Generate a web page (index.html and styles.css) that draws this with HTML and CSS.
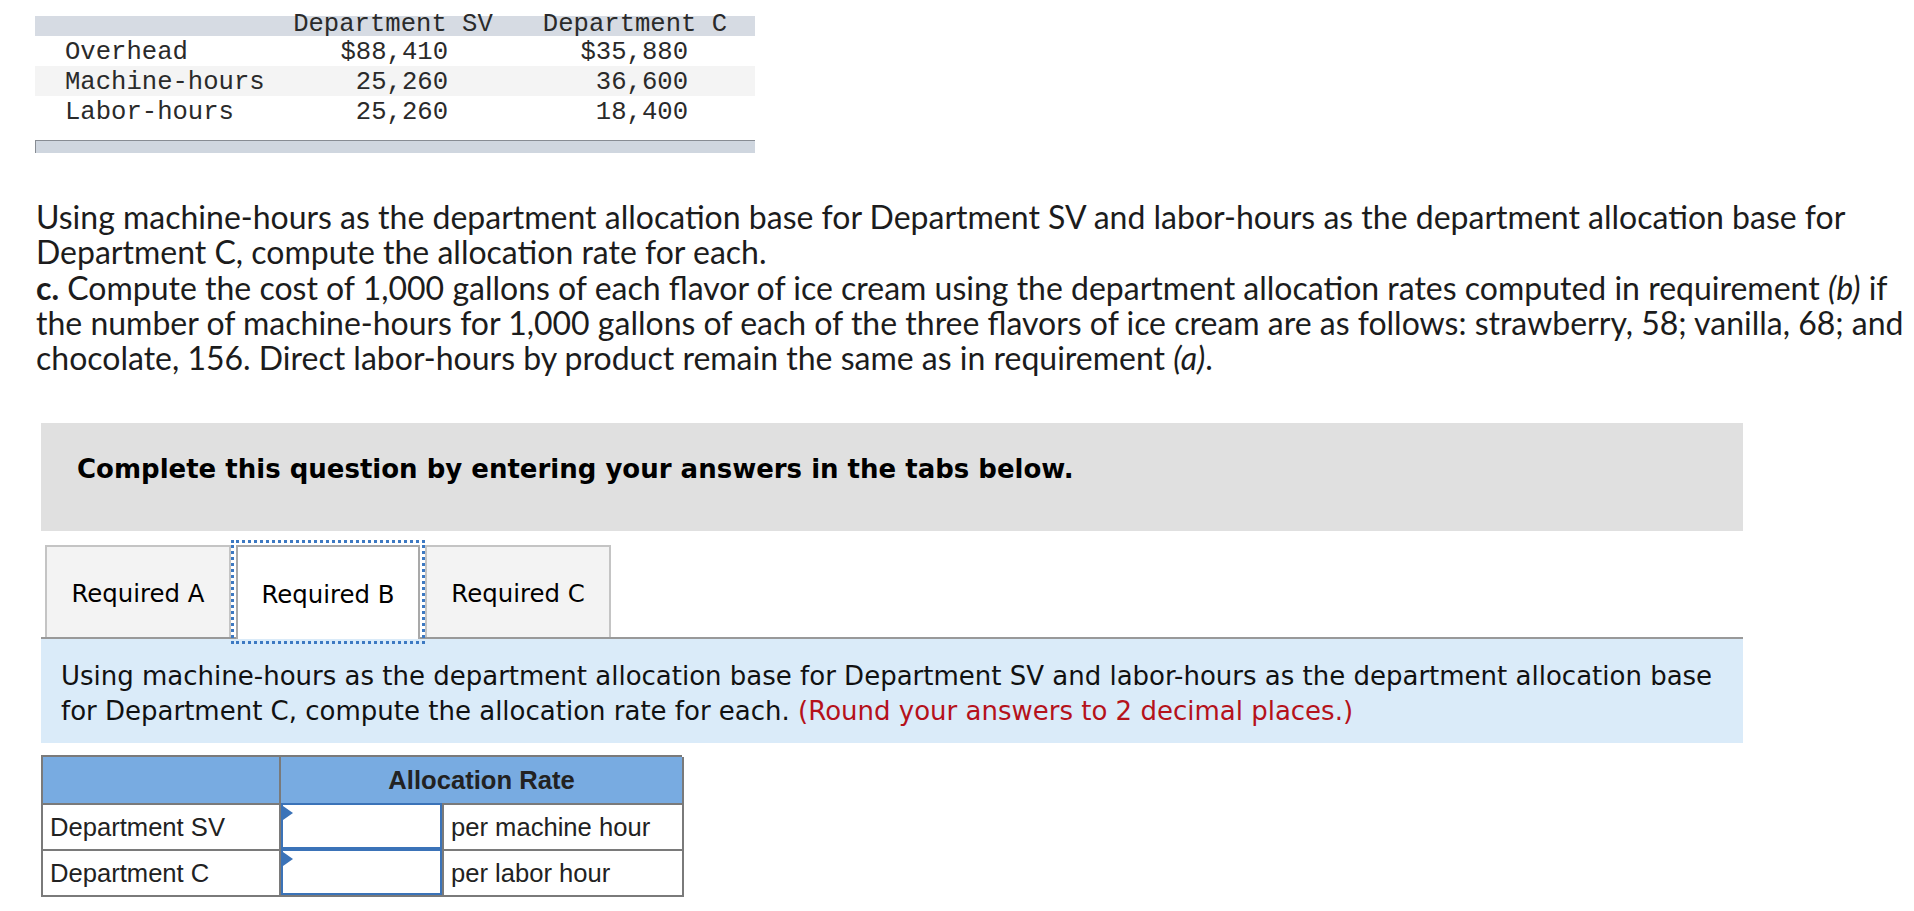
FILE: index.html
```html
<!DOCTYPE html>
<html lang="en">
<head>
<meta charset="utf-8">
<title>Allocation Rate</title>
<link rel="stylesheet" href="styles.css">
</head>
<body>
<div class="data-table">
  <div class="dt-head">
    <div></div>
    <div class="dt-h">Department SV</div>
    <div></div>
    <div class="dt-h">Department C</div>
    <div></div>
  </div>
  <div class="dt-row">
    <div class="dt-label">Overhead</div>
    <div class="dt-val sv">$88,410</div>
    <div></div>
    <div class="dt-val c">$35,880</div>
    <div></div>
  </div>
  <div class="dt-row alt">
    <div class="dt-label">Machine-hours</div>
    <div class="dt-val sv">25,260</div>
    <div></div>
    <div class="dt-val c">36,600</div>
    <div></div>
  </div>
  <div class="dt-row">
    <div class="dt-label">Labor-hours</div>
    <div class="dt-val sv">25,260</div>
    <div></div>
    <div class="dt-val c">18,400</div>
    <div></div>
  </div>
  <div class="dt-scroll"></div>
</div>

<p class="prompt"><span class="ln">Using machine-hours as the department allocation base for Department SV and labor-hours as the department allocation base for</span><br><span class="ln">Department C, compute the allocation rate for each.</span><br><span class="ln"><b>c.</b> Compute the cost of 1,000 gallons of each flavor of ice cream using the department allocation rates computed in requirement <i>(b)</i> if</span><br><span class="ln">the number of machine-hours for 1,000 gallons of each of the three flavors of ice cream are as follows: strawberry, 58; vanilla, 68; and</span><br><span class="ln">chocolate, 156. Direct labor-hours by product remain the same as in requirement <i>(a)</i>.</span></p>

<div class="question">
  <div class="instructions">Complete this question by entering your answers in the tabs below.</div>
  <div class="tabs">
    <div class="tab">Required A</div>
    <div class="tab active">Required B</div>
    <div class="tab">Required C</div>
  </div>
  <div class="tab-panel">
    <div class="panel-text">Using machine-hours as the department allocation base for Department SV and labor-hours as the department allocation base<br>for Department C, compute the allocation rate for each. <span class="hint">(Round your answers to 2 decimal places.)</span></div>
  </div>
  <div class="answer">
    <div class="a-cell a-head"></div>
    <div class="a-cell a-head a-span">Allocation Rate</div>
    <div class="a-cell a-label">Department SV</div>
    <div class="a-cell a-input"><div class="input-box"></div><span class="marker"></span></div>
    <div class="a-cell a-unit">per machine hour</div>
    <div class="a-cell a-label">Department C</div>
    <div class="a-cell a-input"><div class="input-box"></div><span class="marker"></span></div>
    <div class="a-cell a-unit">per labor hour</div>
  </div>
</div>
</body>
</html>
```

FILE: styles.css
```css
* { box-sizing: border-box; }
html, body { margin: 0; padding: 0; background: #fff; }
body { color: #1f1f1f; }

/* top data table */
.data-table {
  margin: 16px 0 0 35px;
  width: 720px;
  font-family: "Liberation Mono", "Courier New", monospace;
  font-size: 25.6px;
  color: #2a2a2a;
}
.dt-head, .dt-row {
  display: grid;
  grid-template-columns: 258px 200px 42px 200px 1fr;
}
.dt-head {
  height: 20px;
  line-height: 17px;
  background: #d6dbe3;
}
.dt-h { text-align: center; white-space: nowrap; }
.dt-row {
  height: 30px;
  padding-top: 3px;
  line-height: 27px;
}
.dt-row.alt { background: #f4f4f4; }
.dt-label { padding-left: 30px; white-space: nowrap; }
.dt-val { text-align: right; white-space: nowrap; }
.dt-val.sv { padding-right: 45px; }
.dt-val.c { padding-right: 47px; }
.dt-scroll {
  margin-top: 14px;
  height: 13px;
  background: #cfd6df;
  border-top: 1px solid #878c93;
  border-left: 1px solid #878c93;
}

/* prompt paragraph */
.prompt {
  margin: 0;
  padding: 46px 0 0 36px;
  font-family: Lato, "Open Sans", sans-serif;
  font-size: 32px;
  line-height: 35.3px;
  color: #1c1c1c;
  white-space: nowrap;
}
.prompt b { font-weight: 700; }

/* question block */
.question {
  margin: 48px 0 0 41px;
  width: 1702px;
  font-family: "DejaVu Sans", Verdana, sans-serif;
}
.instructions {
  height: 108px;
  background: #e0e0e0;
  padding: 28px 0 0 36px;
  font-weight: 700;
  font-size: 26px;
  line-height: 36px;
  color: #000;
  white-space: nowrap;
}
.tabs {
  display: flex;
  gap: 5px;
  margin-top: 14px;
  padding-left: 4px;
  height: 94px;
  border-bottom: 2px solid #999;
  align-items: stretch;
}
.tab {
  width: 186px;
  border: 2px solid #c4c4c4;
  border-bottom: none;
  background: #f3f3f3;
  font-size: 24.4px;
  color: #000;
  display: flex;
  align-items: center;
  justify-content: center;
  padding-top: 2px;
  white-space: nowrap;
}
.tab.active {
  width: 184px;
  background: #fff;
  border-color: #a9a9a9;
  margin-bottom: -2px;
  outline: 3px dotted #3d79c2;
  outline-offset: 2px;
}
.tab-panel {
  background: #daebf9;
  height: 104px;
  padding: 20px 0 0 20px;
}
.panel-text {
  font-size: 26px;
  line-height: 35px;
  color: #111;
  white-space: nowrap;
}
.hint { color: #b5121b; }

/* answer grid */
.answer {
  margin-top: 12px;
  width: 641px;
  display: grid;
  grid-template-columns: 238px 163px 240px;
  grid-template-rows: 48px 46px 46px;
  border-left: 2px solid #7a7a7a;
  border-top: 2px solid #7a7a7a;
  font-family: "Liberation Sans", Arial, sans-serif;
  font-size: 25.6px;
  color: #222;
}
.a-cell {
  border-right: 2px solid #7a7a7a;
  border-bottom: 2px solid #7a7a7a;
  display: flex;
  align-items: center;
  white-space: nowrap;
}
.a-head { background: #78abe1; }
.a-span { grid-column: span 2; justify-content: center; font-weight: 700; }
.a-label { padding-left: 7px; }
.a-unit { padding-left: 7px; }
.a-input { position: relative; padding: 0; align-items: stretch; }
.input-box {
  flex: 1;
  margin: -2px 0 0 0;
  border: 2px solid #3b73b8;
  background: #fff;
}
.marker {
  position: absolute;
  left: 2px;
  top: 1px;
  width: 0;
  height: 0;
  border-top: 7px solid transparent;
  border-bottom: 7px solid transparent;
  border-left: 10px solid #3b73b8;
}
```
